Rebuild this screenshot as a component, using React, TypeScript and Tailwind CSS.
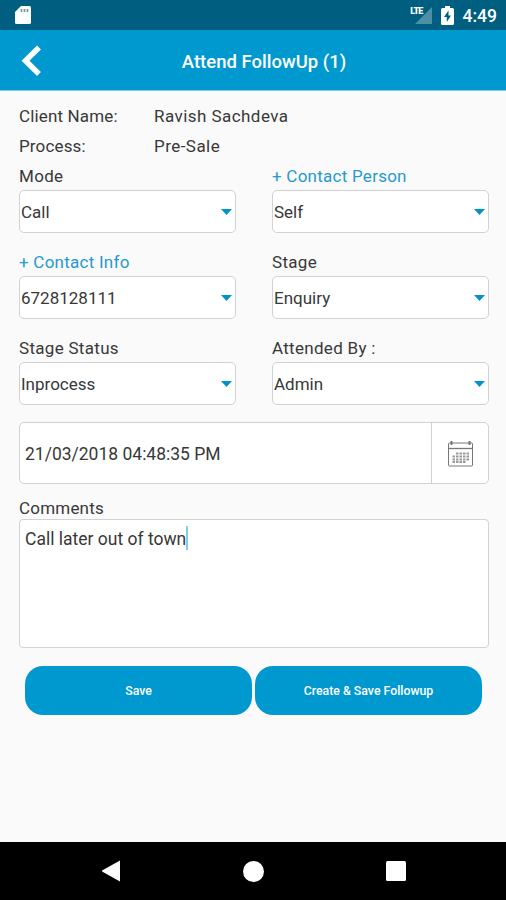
import type { ReactNode } from "react";

export default function App() {
  return (
    <div className="flex h-[900px] w-[506px] flex-col overflow-hidden bg-[#fafafa] font-['Roboto',sans-serif] text-[17px] text-[#383838]">
      <StatusBar />

      {/* Title bar */}
      <header className="grid h-[61px] shrink-0 grid-cols-[60px_1fr_36px] items-center border-b border-[#86c8e2] bg-[#0099cf] text-white">
        <button aria-label="Back" className="pl-[21px]">
          <svg width="21" height="32" viewBox="0 0 21 32" fill="none" stroke="currentColor" strokeWidth="5.5">
            <path d="M18 3.5 4.5 16.7 18 30" />
          </svg>
        </button>
        <h1 className="pt-[5px] pr-[2px] text-center text-[18.5px] font-medium">Attend FollowUp (1)</h1>
      </header>

      <main className="flex grow flex-col pl-[19px] pr-[17px] pt-[10px]">
        <InfoRow label="Client Name:" value="Ravish Sachdeva" />
        <InfoRow label="Process:" value="Pre-Sale" />

        <div className="grid grid-cols-2 gap-x-9 gap-y-[14px]">
          <SelectField label="Mode" value="Call" />
          <SelectField label="+ Contact Person" value="Self" link />
          <SelectField label="+ Contact Info" value="6728128111" link />
          <SelectField label="Stage" value="Enquiry" />
          <SelectField label="Stage Status" value="Inprocess" />
          <SelectField label="Attended By :" value="Admin" />
        </div>

        {/* Date and time */}
        <div className="mt-[17px] flex h-[62px] rounded-[5px] border-[1.5px] border-[#d2d2d2] bg-white">
          <div className="flex grow items-center pl-[5px] pt-[2px] text-[17.5px]">21/03/2018 04:48:35 PM</div>
          <button aria-label="Pick a date" className="flex w-[57px] items-center justify-center border-l border-[#d0d0d0]">
            <CalendarIcon />
          </button>
        </div>

        {/* Comments */}
        <div className="mt-[10px] flex h-[25px] items-center pt-[4px] tracking-[0.2px]">Comments</div>
        <div className="flex h-[129px] items-start rounded-[4px] border-[1.5px] border-[#d2d2d2] bg-white pl-[5px] pt-[5px] text-[17.5px] leading-[28px]">
          <span>Call later out of town</span>
          <span className="mt-[1px] h-6 w-[2px] bg-[#80ccf0]" />
        </div>

        <div className="mt-[18px] flex gap-[3px] pl-[6px] pr-[7px]">
          <ActionButton>Save</ActionButton>
          <ActionButton>Create &amp; Save Followup</ActionButton>
        </div>
      </main>

      <NavBar />
    </div>
  );
}

function StatusBar() {
  return (
    <div className="flex h-[30px] shrink-0 items-center justify-between bg-[#005f80] pl-[14px] pr-[9px] text-white">
      <svg width="18" height="20" viewBox="0 0 18 20">
        <path d="M7 1h8.5q1.5 0 1.5 1.5v15q0 1.5-1.5 1.5h-13Q1 19 1 17.5V7z" fill="#fff" />
        <path d="M7.500 4v3M10.500 4v3M13.500 4v3" stroke="#6f99a8" strokeWidth="1.7" />
      </svg>
      <div className="flex items-center">
        <div className="flex items-start">
          <span className="-mr-[8px] text-[9px] leading-[10px] font-black tracking-[-0.8px]">LTE</span>
          <svg width="17" height="18" viewBox="0 0 17 18">
            <path d="M17 1v17H0z" fill="#4c8fa6" />
          </svg>
        </div>
        <svg className="ml-[9px]" width="13" height="19" viewBox="0 0 13 19">
          <path d="M4 0h5v2h2.5Q13 2 13 3.500v14q0 1.500-1.500 1.500h-10Q0 19 0 17.500v-14Q0 2 1.500 2H4z" fill="#fff" />
          <path d="M7.500 4.500 3 11h2.800v5L10 9.500H7.500z" fill="#005f80" />
        </svg>
        <span className="ml-[9px] pt-[3px] text-[17.5px] leading-none font-medium">4:49</span>
      </div>
    </div>
  );
}

function InfoRow({ label, value }: { label: string; value: string }) {
  return (
    <div className="flex h-[30px] items-center pt-[2px]">
      <span className="w-[135px] tracking-[0.15px]">{label}</span>
      <span className="tracking-[0.45px]">{value}</span>
    </div>
  );
}

function SelectField({ label, value, link }: { label: string; value: string; link?: boolean }) {
  return (
    <div>
      <div className={link ? "flex h-[29px] items-center pt-[2px] tracking-[0.25px] text-[#2699cf]" : "flex h-[29px] items-center pt-[2px] tracking-[0.3px]"}>
        {label}
      </div>
      <div className="flex h-[43px] items-center justify-between rounded-[5px] border-[1.5px] border-[#d2d2d2] bg-white pl-[1px] pr-[3px]">
        <span className="pt-[2px]">{value}</span>
        <svg width="11" height="6" viewBox="0 0 11 6">
          <path d="M0 0h11L5.500 6z" fill="#0093cb" />
        </svg>
      </div>
    </div>
  );
}

function CalendarIcon() {
  return (
    <svg width="27" height="27" viewBox="0 0 27 27" fill="none" stroke="#777">
      <rect x="1.500" y="3" width="24" height="23" rx="1" />
      <path d="M1.500 8.500h24" strokeWidth="1.300" />
      <path d="M4.500 1v4M22.500 1v4" strokeWidth="2" />
      <path d="M9 13.500h13.500M5.500 16.500h17M5.500 19.500h17M5.500 22h13.500" strokeWidth="1.800" strokeDasharray="2.500 1" stroke="#999" />
    </svg>
  );
}

function ActionButton({ children }: { children: ReactNode }) {
  return (
    <button className="h-[49px] flex-1 rounded-[18px] bg-[#0099cf] pt-[2px] text-[12.3px] font-medium text-white">
      {children}
    </button>
  );
}

function NavBar() {
  return (
    <nav className="flex h-[58px] shrink-0 items-center justify-between bg-black pl-[102px] pr-[100px]">
      <svg width="18" height="22" viewBox="0 0 18 22">
        <path d="M18 .5v21L.5 11.700q-1-.7 0-1.400z" fill="#fff" />
      </svg>
      <svg width="21" height="21" viewBox="0 0 21 21">
        <circle cx="10.500" cy="10.500" r="10.500" fill="#fff" />
      </svg>
      <svg width="20" height="20" viewBox="0 0 20 20">
        <rect width="20" height="20" rx="1.500" fill="#fff" />
      </svg>
    </nav>
  );
}
